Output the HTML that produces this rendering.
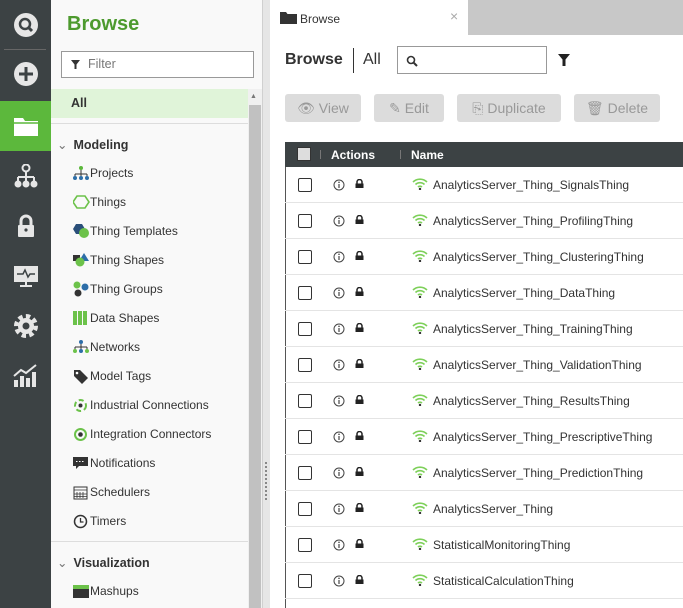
<!DOCTYPE html><html><head><style>
*{box-sizing:border-box;margin:0;padding:0}
body{width:683px;height:608px;overflow:hidden;font-family:"Liberation Sans",sans-serif;position:relative;background:#fff}
.nav{position:absolute;left:0;top:0;width:51px;height:608px;background:#3c4244}
.nav .ic{position:absolute;left:0;width:51px;height:50px;display:flex;align-items:center;justify-content:center}
.panel{position:absolute;left:51px;top:0;width:211px;height:608px;background:#f9f9f9}
.split{position:absolute;left:262px;top:0;width:8px;height:608px;background:#e6e6e6;border-left:1px solid #d0d0d0}
.sb{position:absolute;left:248px;top:89px;width:14px;height:519px;background:#f0f0f0}
.sb div{position:absolute;left:1px;top:16px;width:12px;height:503px;background:#c1c1c1}
.item{position:absolute;left:73px;font-size:12px;color:#333;height:16px;line-height:16px;display:flex;align-items:center}
.sec{position:absolute;left:57px;font-size:12.5px;font-weight:bold;color:#333}
.main{position:absolute;left:270px;top:0;width:413px;height:608px}
.btn{position:absolute;top:94px;height:28px;background:#dcdcdc;border-radius:3px;color:#999;font-size:14px;line-height:28px;text-align:center}
.row{position:absolute;left:285px;width:398px;height:36px;border-bottom:1px solid #e4e4e4;font-size:12px;color:#333}
.row .cb{position:absolute;left:13px;top:11px;width:14px;height:14px;border:1.5px solid #333;border-radius:2px;background:#fff}
.row .inf{position:absolute;left:48px;top:12px}
.row .lk{position:absolute;left:70px;top:12px;width:9px;height:9px}
.row .nm{position:absolute;left:148px;top:11px}
.row .wf{position:absolute;left:127px;top:11px}
</style></head><body>
<div class="nav">
 <div class="ic" style="top:0"><svg width="26" height="26"><circle cx="13" cy="13" r="12" fill="#e6e6e6"/><circle cx="12" cy="12" r="5" fill="none" stroke="#3c4244" stroke-width="2.5"/><path d="M15.5 15.5L19 19" stroke="#3c4244" stroke-width="3"/></svg></div>
 <div style="position:absolute;left:4px;top:49px;width:42px;height:1px;background:#666"></div>
 <div class="ic" style="top:49px"><svg width="26" height="26"><circle cx="13" cy="13" r="12" fill="#e6e6e6"/><path d="M13 6v14M6 13h14" stroke="#3c4244" stroke-width="3"/></svg></div>
 <div class="ic" style="top:101px;background:#5cb83c"><svg width="26" height="22"><path d="M1 3h9l2 3h13v15H1z" fill="#fff"/><path d="M1 8h24" stroke="#5cb83c" stroke-width="1.5"/></svg></div>
 <div class="ic" style="top:151px"><svg width="26" height="24" fill="#e6e6e6"><circle cx="13" cy="4" r="3.5" fill="none" stroke="#e6e6e6" stroke-width="2"/><path d="M13 8v5M5 13h16M5 13v4M13 13v4M21 13v4" stroke="#e6e6e6" stroke-width="2" fill="none"/><circle cx="5" cy="20" r="3.5"/><circle cx="13" cy="20" r="3.5"/><circle cx="21" cy="20" r="3.5"/></svg></div>
 <div class="ic" style="top:201px"><svg width="20" height="24"><path d="M5 11V7a5 5 0 0110 0v4" stroke="#e6e6e6" stroke-width="3" fill="none"/><rect x="2" y="11" width="16" height="12" rx="1" fill="#e6e6e6"/><circle cx="10" cy="16" r="1.6" fill="#3c4244"/></svg></div>
 <div class="ic" style="top:251px"><svg width="26" height="24"><rect x="1" y="2" width="24" height="16" fill="#e6e6e6"/><path d="M4 10h6l2-4 3 7 2-3h5" stroke="#3c4244" stroke-width="1.5" fill="none"/><path d="M13 18v3M7 22h12" stroke="#e6e6e6" stroke-width="2"/></svg></div>
 <div class="ic" style="top:301px"><svg width="26" height="26"><circle cx="13" cy="13" r="9" fill="none" stroke="#e6e6e6" stroke-width="6" stroke-dasharray="4 3"/><circle cx="13" cy="13" r="8" fill="#e6e6e6"/><circle cx="13" cy="13" r="3.5" fill="#3c4244"/></svg></div>
 <div class="ic" style="top:351px"><svg width="28" height="24" fill="#e6e6e6"><rect x="2" y="16" width="4" height="7"/><rect x="8" y="12" width="4" height="11"/><rect x="14" y="14" width="4" height="9"/><rect x="20" y="8" width="4" height="15"/><path d="M2 12l7-6 5 3 10-8" stroke="#e6e6e6" stroke-width="2" fill="none"/></svg></div>
</div>
<div class="panel">
 <div style="position:absolute;left:16px;top:13px;font-size:20px;font-weight:bold;color:#4d9a2e">Browse</div>
 <div style="position:absolute;left:10px;top:51px;width:193px;height:27px;border:1px solid #999;background:#fff;font-size:12.5px;color:#777;line-height:25px;padding-left:26px">Filter<svg style="position:absolute;left:9px;top:8px" width="9" height="9"><path d="M0 0h9L5.5 4.5V9h-2V4.5z" fill="#333"/></svg></div>
 <div style="position:absolute;left:0;top:89px;width:197px;height:29px;background:#e0f4d9;font-size:12.5px;font-weight:bold;color:#333;line-height:29px;padding-left:20px">All</div>
 <div style="position:absolute;left:0;top:123px;width:197px;height:1px;background:#ddd"></div>
 <div style="position:absolute;left:0;top:541px;width:197px;height:1px;background:#ddd"></div>
</div>
<div class="sec" style="top:137px"><span style="font-weight:normal;color:#777;margin-right:6px">⌄</span>Modeling</div>
<div class="sec" style="top:555px"><span style="font-weight:normal;color:#777;margin-right:6px">⌄</span>Visualization</div>
<div class="item" style="top:165px"><svg width="17" height="14"><circle cx="8" cy="2" r="2" fill="#5cb83c"/><path d="M8 4v4M2 8h12M2 8v2M8 8v2M14 8v2" stroke="#333" stroke-width="1"/><circle cx="2" cy="12" r="2" fill="#2d6ea8"/><circle cx="8" cy="12" r="2" fill="#2d6ea8"/><circle cx="14" cy="12" r="2" fill="#2d6ea8"/></svg>Projects</div>
<div class="item" style="top:194px"><svg width="17" height="14"><path d="M4 1h8l4 6-4 6H4L0 7z" fill="none" stroke="#6cc24a" stroke-width="1.6"/></svg>Things</div>
<div class="item" style="top:223px"><svg width="17" height="14"><path d="M3 0h6l3 5-3 5H3L0 5z" fill="#2a4f7a"/><circle cx="11" cy="9" r="5" fill="#6cc24a"/></svg>Thing Templates</div>
<div class="item" style="top:252px"><svg width="17" height="14"><rect x="0" y="2" width="7" height="6" fill="#333"/><path d="M11 0l5 8h-10z" fill="#2d6ea8"/><circle cx="7" cy="9" r="4.5" fill="#6cc24a"/></svg>Thing Shapes</div>
<div class="item" style="top:281px"><svg width="17" height="16"><circle cx="4" cy="4" r="3.5" fill="#6cc24a"/><circle cx="12" cy="6" r="3.5" fill="#2d6ea8"/><circle cx="5" cy="12" r="3.5" fill="#333"/></svg>Thing Groups</div>
<div class="item" style="top:310px"><svg width="17" height="14" fill="#6cc24a"><rect x="0" y="0" width="4" height="14"/><rect x="5" y="0" width="4" height="14"/><rect x="10" y="0" width="4" height="14"/></svg>Data Shapes</div>
<div class="item" style="top:339px"><svg width="17" height="14"><circle cx="8" cy="2" r="2" fill="#2d6ea8"/><path d="M8 4v3M2 7h12M2 7v5M8 7v5M14 7v5" stroke="#333"/><circle cx="2" cy="11" r="2" fill="#6cc24a"/><circle cx="8" cy="11" r="2" fill="#2d6ea8"/><circle cx="14" cy="11" r="2" fill="#6cc24a"/></svg>Networks</div>
<div class="item" style="top:368px"><svg width="17" height="15"><path d="M1 1h6l8 8-6 6-8-8z" fill="#333"/><circle cx="4" cy="4" r="1.3" fill="#fff"/></svg>Model Tags</div>
<div class="item" style="top:397px"><svg width="17" height="15"><circle cx="7.5" cy="7.5" r="5.5" fill="none" stroke="#6cc24a" stroke-width="2" stroke-dasharray="5 3"/><circle cx="7.5" cy="7.5" r="2" fill="#333"/></svg>Industrial Connections</div>
<div class="item" style="top:426px"><svg width="17" height="15"><circle cx="7.5" cy="7.5" r="5.5" fill="none" stroke="#6cc24a" stroke-width="2"/><circle cx="7.5" cy="7.5" r="2.3" fill="#333"/></svg>Integration Connectors</div>
<div class="item" style="top:455px"><svg width="17" height="14"><path d="M0 1h15v9H6l-3 3v-3H0z" fill="#333"/><path d="M3 5.5h9" stroke="#fff" stroke-dasharray="1.5 1.5"/></svg>Notifications</div>
<div class="item" style="top:484px"><svg width="17" height="15"><rect x="1" y="2" width="13" height="12" fill="none" stroke="#333"/><path d="M1 5h13M4 7v6M7 7v6M10 7v6M1 9h13M1 11.5h13" stroke="#333" stroke-width=".8"/></svg>Schedulers</div>
<div class="item" style="top:513px"><svg width="17" height="15"><circle cx="7.5" cy="7.5" r="6" fill="none" stroke="#333" stroke-width="1.5"/><path d="M7.5 4v4h3" stroke="#333" stroke-width="1.3" fill="none"/></svg>Timers</div>
<div class="item" style="top:583px"><svg width="17" height="15"><rect x="0" y="1" width="16" height="13" fill="#333"/><rect x="0" y="1" width="16" height="4" fill="#6cc24a"/></svg>Mashups</div>
<div class="sb"><div></div></div>
<div style="position:absolute;left:250px;top:93px;font-size:7px;color:#777">▲</div>
<div class="split"></div>
<div style="position:absolute;left:265px;top:462px;width:2px;height:40px;background:repeating-linear-gradient(#888 0 2px,transparent 2px 4px)"></div>
<div class="main">
 <div style="position:absolute;left:198px;top:0;width:215px;height:35px;background:#c8c8c8"></div>
 <svg style="position:absolute;left:10px;top:11px" width="17" height="13"><path d="M0 1h6l1.5 2H17v10H0z" fill="#333"/></svg>
 <div style="position:absolute;left:30px;top:12px;font-size:12px;color:#333">Browse</div>
 <div style="position:absolute;left:180px;top:8px;font-size:14px;color:#aaa">×</div>
 <div style="position:absolute;left:15px;top:51px;font-size:16px;font-weight:bold;color:#333">Browse</div>
 <div style="position:absolute;left:83px;top:48px;width:1px;height:25px;background:#333"></div>
 <div style="position:absolute;left:93px;top:51px;font-size:16px;color:#333">All</div>
 <div style="position:absolute;left:127px;top:46px;width:150px;height:28px;border:1px solid #999"><svg style="position:absolute;left:8px;top:8px" width="12" height="12"><circle cx="5" cy="5" r="3.5" fill="none" stroke="#333" stroke-width="1.6"/><path d="M7.5 7.5L11 11" stroke="#333" stroke-width="2"/></svg></div>
 <svg style="position:absolute;left:288px;top:54px" width="12" height="12"><path d="M0 0h12L7.5 5.5V12h-3V5.5z" fill="#222"/></svg>
</div>
<div class="btn" style="left:285px;width:76px">👁&#xFE0E; View</div>
<div class="btn" style="left:374px;width:70px">✎ Edit</div>
<div class="btn" style="left:457px;width:104px">⎘ Duplicate</div>
<div class="btn" style="left:574px;width:86px">🗑&#xFE0E; Delete</div>
<div style="position:absolute;left:285px;top:142px;width:1px;height:466px;background:#555"></div>
<div style="position:absolute;left:285px;top:142px;width:398px;height:25px;background:#3c4244;color:#fff;font-size:12px;font-weight:bold">
 <div style="position:absolute;left:12px;top:5px;width:14px;height:14px;background:#ddd;border:1px solid #333"></div>
 <div style="position:absolute;left:35px;top:8px;width:1px;height:9px;background:#777"></div>
 <div style="position:absolute;left:46px;top:6px">Actions</div>
 <div style="position:absolute;left:115px;top:8px;width:1px;height:9px;background:#777"></div>
 <div style="position:absolute;left:126px;top:6px">Name</div>
</div>
<div id="rows"></div>
<script>
var n=["AnalyticsServer_Thing_SignalsThing","AnalyticsServer_Thing_ProfilingThing","AnalyticsServer_Thing_ClusteringThing","AnalyticsServer_Thing_DataThing","AnalyticsServer_Thing_TrainingThing","AnalyticsServer_Thing_ValidationThing","AnalyticsServer_Thing_ResultsThing","AnalyticsServer_Thing_PrescriptiveThing","AnalyticsServer_Thing_PredictionThing","AnalyticsServer_Thing","StatisticalMonitoringThing","StatisticalCalculationThing"];
var h="";n.forEach(function(s,i){h+='<div class="row" style="top:'+(167+i*36)+'px"><div class="cb"></div><svg class="inf" width="12" height="12"><circle cx="6" cy="6" r="5" fill="none" stroke="#444" stroke-width="1"/><path d="M6 5v4" stroke="#444" stroke-width="1.2"/><circle cx="6" cy="3.3" r=".8" fill="#444"/></svg><svg class="lk" width="9" height="10"><path d="M2 4.5V3a2.5 2.5 0 015 0v1.5" stroke="#222" stroke-width="1.5" fill="none"/><rect x="0.5" y="4.5" width="8" height="5.5" fill="#222"/></svg><svg class="wf" width="16" height="12"><path d="M1 4a10 10 0 0114 0M3.5 6.5a6.5 6.5 0 019 0M6 9a3 3 0 014 0" stroke="#7ed05a" stroke-width="1.6" fill="none"/><circle cx="8" cy="11" r="1.2" fill="#333"/></svg><div class="nm">'+s+'</div></div>'});
document.getElementById("rows").innerHTML=h;
</script>
</body></html>
